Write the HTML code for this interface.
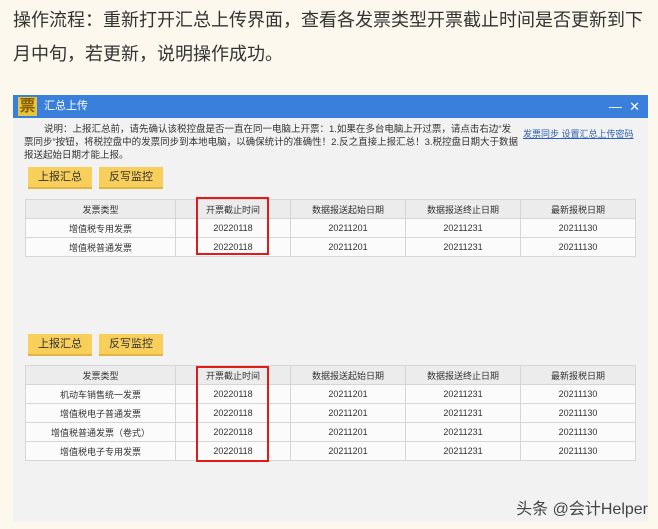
<!DOCTYPE html>
<html><head><meta charset="utf-8"><style>
*{margin:0;padding:0;box-sizing:border-box}
body{width:658px;height:529px;background:#fdf8ee;font-family:"Liberation Sans","Noto Sans CJK SC",sans-serif;position:relative;overflow:hidden}
.p{position:absolute;left:13px;font-size:18px;color:#333;white-space:nowrap;line-height:34px}
.win{position:absolute;left:13px;top:95px;width:635px;height:427px;background:#f2f2f2}
.tb{height:23px;background:#3a7fdc;color:#fff;font-size:11px;position:relative}
.tb .ic{position:absolute;left:5px;top:2px;width:19px;height:19px;background:#e7c53b;color:#8a5d00;font-size:16px;line-height:19px;text-align:center;font-weight:bold}
.tb .t{position:absolute;left:31px;top:0;line-height:23px}
.tb .c{position:absolute;right:8px;top:0;line-height:23px;font-size:13px}
.note{position:absolute;left:11px;top:28px;width:495px;font-size:9.5px;line-height:13px;color:#333;text-indent:20px}
.lk{position:absolute;left:510px;top:32px;font-size:9px;color:#2a5fb5;text-decoration:underline}
.btn{position:absolute;width:64px;height:22px;background:#f7cf5a;border-bottom:2px solid #e0b540;font-size:11px;color:#333;text-align:center;line-height:21px}
table{position:absolute;left:12px;width:611px;border-collapse:collapse;font-size:9px;color:#333;background:#fbfbfb}
td{border:1px solid #d6d6d6;text-align:center;height:19px;padding:0}
tr:first-child td{background:#ececec}
.red{position:absolute;border:2px solid #e21a1a}
.wm{position:absolute;right:10px;top:495px;font-size:16px;color:#444}
</style></head><body>
<div class="p" style="top:3px">操作流程：重新打开汇总上传界面，查看各发票类型开票截止时间是否更新到下</div>
<div class="p" style="top:37px">月中旬，若更新，说明操作成功。</div>
<div class="win">
<div class="tb"><div class="ic">票</div><div class="t">汇总上传</div><div class="c">—&nbsp;&nbsp;✕</div></div>
<div class="note">说明：上报汇总前，请先确认该税控盘是否一直在同一电脑上开票：1.如果在多台电脑上开过票，请点击右边“发票同步”按钮，将税控盘中的发票同步到本地电脑，以确保统计的准确性！2.反之直接上报汇总！3.税控盘日期大于数据报送起始日期才能上报。</div>
<div class="lk">发票同步 设置汇总上传密码</div>
<div class="btn" style="left:15px;top:72px">上报汇总</div>
<div class="btn" style="left:86px;top:72px">反写监控</div>
<table style="top:104px">
<tr><td style="width:150px">发票类型</td><td style="width:115px">开票截止时间</td><td style="width:115px">数据报送起始日期</td><td style="width:115px">数据报送终止日期</td><td>最新报税日期</td></tr>
<tr><td>增值税专用发票</td><td>20220118</td><td>20211201</td><td>20211231</td><td>20211130</td></tr>
<tr><td>增值税普通发票</td><td>20220118</td><td>20211201</td><td>20211231</td><td>20211130</td></tr>
</table>
<div class="red" style="left:183px;top:102px;width:73px;height:58px"></div>
<div class="btn" style="left:15px;top:239px">上报汇总</div>
<div class="btn" style="left:86px;top:239px">反写监控</div>
<table style="top:270px">
<tr><td style="width:150px">发票类型</td><td style="width:115px">开票截止时间</td><td style="width:115px">数据报送起始日期</td><td style="width:115px">数据报送终止日期</td><td>最新报税日期</td></tr>
<tr><td>机动车销售统一发票</td><td>20220118</td><td>20211201</td><td>20211231</td><td>20211130</td></tr>
<tr><td>增值税电子普通发票</td><td>20220118</td><td>20211201</td><td>20211231</td><td>20211130</td></tr>
<tr><td>增值税普通发票（卷式）</td><td>20220118</td><td>20211201</td><td>20211231</td><td>20211130</td></tr>
<tr><td>增值税电子专用发票</td><td>20220118</td><td>20211201</td><td>20211231</td><td>20211130</td></tr>
</table>
<div class="red" style="left:183px;top:271px;width:73px;height:96px"></div>
</div>
<div class="wm">头条 @会计Helper</div>
</body></html>
